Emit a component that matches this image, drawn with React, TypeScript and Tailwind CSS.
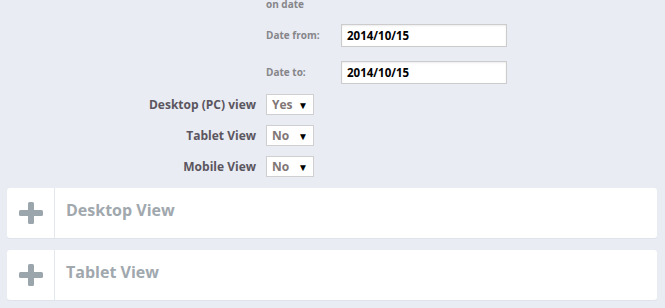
import React from "react";

const Plus = () => (
  <svg width="24" height="22" viewBox="0 0 24 22" aria-hidden>
    <rect x="9" y="0" width="6" height="22" rx="1.5" fill="#9ba5ac" />
    <rect x="0" y="8" width="24" height="6" rx="1.5" fill="#9ba5ac" />
  </svg>
);

const Select = ({ value }: { value: string }) => (
  <div className="flex h-[21px] w-[48px] items-center justify-between border border-[#cfcfcf] bg-white pl-[5px] pr-[5px]">
    <span className="text-[12px] font-bold leading-none text-[#7f7676]">{value}</span>
    <span className="text-[10px] leading-none text-black">▼</span>
  </div>
);

const DateInput = () => (
  <div className="flex h-[23px] w-[166px] items-center border border-[#cccccc] bg-white pl-[5px] shadow-[inset_0_1px_2px_rgba(0,0,0,0.08)]">
    <span className="text-[11.5px] font-bold leading-none text-black">2014/10/15</span>
  </div>
);

const SelectRow = ({ label, value, mt }: { label: string; value: string; mt: string }) => (
  <div className={`flex items-center ${mt}`}>
    <div className="w-[256px] text-right text-[12px] font-bold text-[#5b5560]">{label}</div>
    <div className="ml-[10px]">
      <Select value={value} />
    </div>
  </div>
);

const Card = ({ title, mt }: { title: string; mt: string }) => (
  <div className={`mx-[7px] flex h-[50px] w-[650px] items-stretch rounded-[3px] bg-white shadow-[0_1px_0_#dfe4ec] ${mt}`}>
    <div className="flex w-[48px] items-center justify-center border-r border-[#e3e7ee]">
      <Plus />
    </div>
    <div className="flex items-center pb-[6px] pl-[11px] text-[16px] font-bold text-[#a0a8ae]">{title}</div>
  </div>
);

export default function App() {
  return (
    <div
      className="h-[308px] w-[665px] overflow-hidden bg-[#e9ecf3]"
      style={{ fontFamily: '"Open Sans", "Liberation Sans", sans-serif' }}
    >
      <div className="flex flex-col">
        <div className="mt-[-3px] flex h-[14px] items-center pl-[266px] text-[10px] font-bold text-[#86868a]">
          on date
        </div>
        <div className="mt-[13px] flex items-center pl-[266px]">
          <div className="w-[75px] text-[10px] font-bold text-[#86868a]">Date from:</div>
          <DateInput />
        </div>
        <div className="mt-[14px] flex items-center pl-[266px]">
          <div className="w-[75px] text-[10px] font-bold text-[#86868a]">Date to:</div>
          <DateInput />
        </div>
        <SelectRow label="Desktop (PC) view" value="Yes" mt="mt-[10px]" />
        <SelectRow label="Tablet View" value="No" mt="mt-[10px]" />
        <SelectRow label="Mobile View" value="No" mt="mt-[10px]" />
        <Card title="Desktop View" mt="mt-[11px]" />
        <Card title="Tablet View" mt="mt-[12px]" />
      </div>
    </div>
  );
}
